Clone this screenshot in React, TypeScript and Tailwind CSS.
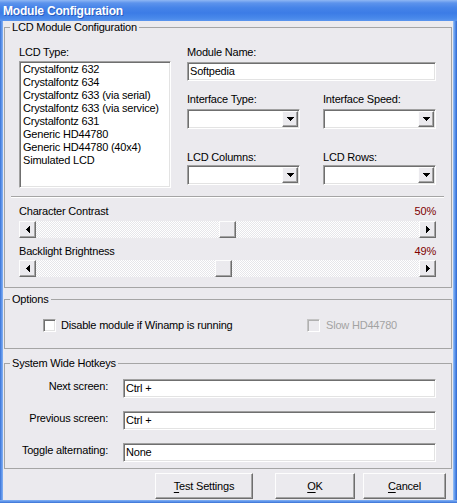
type SliderProps = { label: string; value: number };
type ButtonProps = { accel: string; rest: string; className: string };

// classic 3D bevels
const sunken =
  "border border-t-[#a0a0a0] border-l-[#a0a0a0] border-b-white border-r-white shadow-[inset_1px_1px_0_#6f6f6f,inset_-1px_-1px_0_#e3e3e3]";
const raised =
  "border border-t-[#fdfdfd] border-l-[#fdfdfd] border-b-[#6e6e6e] border-r-[#6e6e6e] shadow-[inset_-1px_-1px_0_#a4a4a4] bg-[#ebeaee]";

const lcdTypes = [
  "Crystalfontz 632",
  "Crystalfontz 634",
  "Crystalfontz 633 (via serial)",
  "Crystalfontz 633 (via service)",
  "Crystalfontz 631",
  "Generic HD44780",
  "Generic HD44780 (40x4)",
  "Simulated LCD",
];

const hotkeys = [
  { label: "Next screen:", value: "Ctrl +" },
  { label: "Previous screen:", value: "Ctrl +" },
  { label: "Toggle alternating:", value: "None" },
];

const ScrollArrow = ({ dir }: { dir: "left" | "right" }) => (
  <div className={`flex h-full w-[17px] shrink-0 items-center justify-center ${raised}`}>
    <svg width="4" height="7" viewBox="0 0 4 7" shapeRendering="crispEdges">
      <polygon points={dir === "left" ? "4,0 4,7 0,3.5" : "0,0 0,7 4,3.5"} fill="#000" />
    </svg>
  </div>
);

const Slider = ({ label, value }: SliderProps) => {
  const offset = Math.round((366 * value) / 100);
  return (
    <div>
      <div className="flex justify-between leading-[13px]">
        <span>{label}</span>
        <span className="text-[#800000]">{value}%</span>
      </div>
      <div className="mt-[3px] flex h-[17px]">
        <ScrollArrow dir="left" />
        <div className="flex flex-1 bg-[image:repeating-conic-gradient(#ffffff_0_25%,#e6e6ea_0_50%)] bg-[length:2px_2px]">
          <div style={{ width: offset }} />
          <div className={`h-full w-[17px] ${raised}`} />
        </div>
        <ScrollArrow dir="right" />
      </div>
    </div>
  );
};

const Combo = () => (
  <div className={`flex h-[20px] bg-white p-[1px] ${sunken}`}>
    <div className="flex-1" />
    <div className={`flex w-[16px] items-center justify-center ${raised}`}>
      <svg width="7" height="4" viewBox="0 0 7 4" shapeRendering="crispEdges">
        <polygon points="0,0 7,0 3.5,4" fill="#000" />
      </svg>
    </div>
  </div>
);

const TextBox = ({ value }: { value: string }) => (
  <div className={`h-[19px] bg-white pl-[2px] leading-[17px] ${sunken}`}>{value}</div>
);

const Button = ({ accel, rest, className }: ButtonProps) => (
  <button className={`h-[26px] ${raised} ${className}`}>
    <span className="underline underline-offset-[2px]">{accel}</span>
    {rest}
  </button>
);

export default function App() {
  return (
    <div className="flex h-[503px] w-[457px] flex-col overflow-hidden font-['Liberation_Sans',Arial,sans-serif] text-[11px] tracking-[-0.2px] text-black">
      {/* title bar */}
      <div className="h-[21px] shrink-0 bg-[linear-gradient(to_bottom,#8fb7f4_0,#5c93ec_3px,#4583e8_8px,#3c7ce6_13px,#4888ea_18px,#5a95ee_21px)] pl-[3px] pt-[4px] text-[12px] font-bold leading-[14px] text-white [text-shadow:1px_1px_0_#2a5cc0]">
        Module Configuration
      </div>

      <div className="flex h-[479px] shrink-0">
        <div className="w-[3px] bg-[linear-gradient(to_right,#3a72d4,#5e94ea,#86b3f3)]" />

        <div className="flex-1 bg-[#ebeaee]">
          {/* LCD module group */}
          <fieldset className="mx-[1px] border border-[#a5a5a5]">
            <legend className="ml-[5px] px-[2px] leading-[13px]">LCD Module Configuration</legend>
            <div className="pb-[10px] pl-[14px] pr-[15px] pt-[12px]">
              <div className="flex gap-[16px]">
                <div className="w-[152px]">
                  <div className="leading-[13px]">LCD Type:</div>
                  <ul className={`mt-[2px] h-[127px] bg-white pl-[3px] pt-[1px] ${sunken}`}>
                    {lcdTypes.map((t) => (
                      <li key={t} className="leading-[13px]">
                        {t}
                      </li>
                    ))}
                  </ul>
                </div>
                <div className="flex-1">
                  <div className="leading-[13px]">Module Name:</div>
                  <div className="mt-[3px]">
                    <TextBox value="Softpedia" />
                  </div>
                  <div className="mt-[12px] grid grid-cols-2 gap-x-[23px]">
                    <div className="leading-[13px]">Interface Type:</div>
                    <div className="leading-[13px]">Interface Speed:</div>
                    <div className="mt-[3px]">
                      <Combo />
                    </div>
                    <div className="mt-[3px]">
                      <Combo />
                    </div>
                  </div>
                  <div className="mt-[22px] grid grid-cols-2 gap-x-[23px]">
                    <div className="leading-[13px]">LCD Columns:</div>
                    <div className="leading-[13px]">LCD Rows:</div>
                    <div className="mt-[1px]">
                      <Combo />
                    </div>
                    <div className="mt-[1px]">
                      <Combo />
                    </div>
                  </div>
                </div>
              </div>

              <div className="-mx-[8px] mt-[8px] border-b border-t border-b-white border-t-[#a5a5a5]" />

              <div className="mt-[7px]">
                <Slider label="Character Contrast" value={50} />
              </div>
              <div className="mt-[7px] [&>div>div:last-child]:mt-[2px]">
                <Slider label="Backlight Brightness" value={49} />
              </div>
            </div>
          </fieldset>

          {/* options group */}
          <fieldset className="mx-[1px] mt-[5px] border border-[#a5a5a5]">
            <legend className="ml-[5px] px-[2px] leading-[13px]">Options</legend>
            <div className="grid grid-cols-[264px_1fr] pb-[16px] pl-[38px] pt-[13px]">
              <div className="flex items-center gap-[5px] leading-[13px]">
                <div className={`h-[13px] w-[13px] bg-white ${sunken}`} />
                <span>Disable module if Winamp is running</span>
              </div>
              <div className="flex items-center gap-[6px] leading-[13px] text-[#a3a3a3]">
                <div className="h-[13px] w-[13px] border border-b-white border-l-[#c4c4c4] border-r-white border-t-[#c4c4c4] bg-[#ebeaee] shadow-[inset_1px_1px_0_#b0b0b0]" />
                <span>Slow HD44780</span>
              </div>
            </div>
          </fieldset>

          {/* hotkeys group */}
          <fieldset className="mx-[1px] mt-[8px] border border-[#a5a5a5]">
            <legend className="ml-[5px] px-[2px] leading-[13px]">System Wide Hotkeys</legend>
            <div className="flex flex-col gap-[13px] pb-[6px] pr-[15px] pt-[9px]">
              {hotkeys.map((h) => (
                <div key={h.label} className="flex gap-[15px]">
                  <div className="mt-[1px] w-[103px] text-right leading-[13px]">{h.label}</div>
                  <div className="flex-1">
                    <TextBox value={h.value} />
                  </div>
                </div>
              ))}
            </div>
          </fieldset>

          <div className="mt-[4px] flex justify-end pr-[7px]">
            <Button accel="T" rest="est Settings" className="w-[98px]" />
            <Button accel="O" rest="K" className="ml-[22px] w-[80px]" />
            <Button accel="C" rest="ancel" className="ml-[8px] w-[83px]" />
          </div>
        </div>

        <div className="w-[4px] bg-[linear-gradient(to_right,#9cc5f8,#6ea2ee,#4a83e3,#3068cc)]" />
      </div>

      <div className="h-[3px] bg-[linear-gradient(to_bottom,#86b3f3,#5e94ea,#3a72d4)]" />
    </div>
  );
}
